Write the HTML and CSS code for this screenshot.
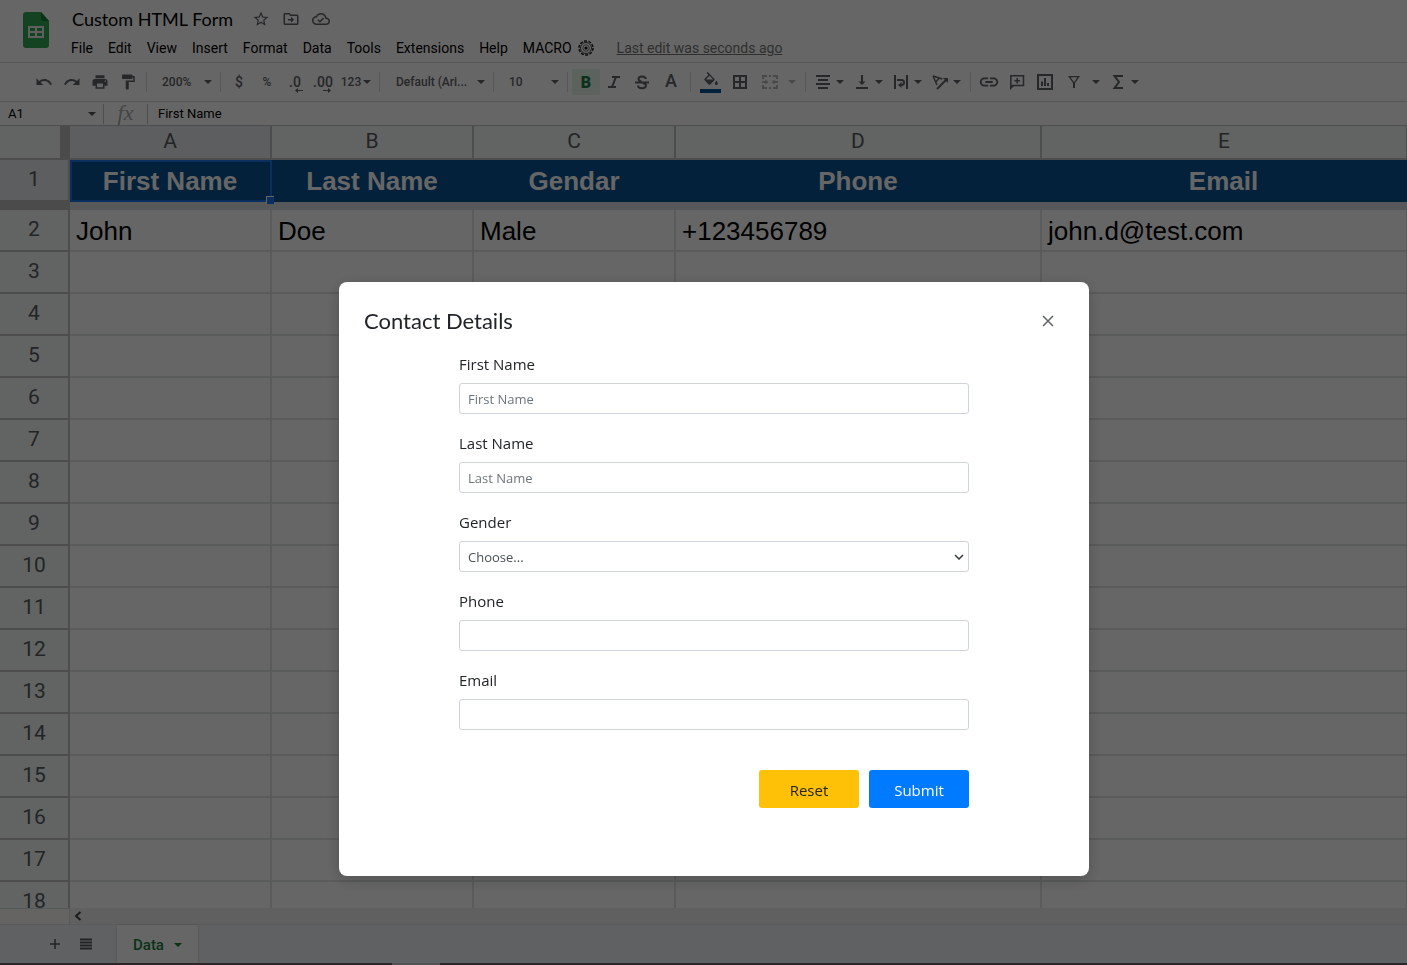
FILE: index.html
```html
<!DOCTYPE html>
<html lang="en">
<head>
<meta charset="utf-8">
<title>Custom HTML Form</title>
<link rel="stylesheet" href="styles.css">
</head>
<body>
<svg class="defs" aria-hidden="true">
  <symbol id="caret" viewBox="0 0 8 4"><path d="M0 0h8L4 4z"/></symbol>
</svg>
<div class="app">
  <header class="header">
    <svg class="logo" viewBox="0 0 26 36" aria-hidden="true">
      <path fill="#34a853" d="M3 0h15l8 9v24a3 3 0 0 1-3 3H3a3 3 0 0 1-3-3V3a3 3 0 0 1 3-3z"/>
      <path fill="#188038" d="M18 0l8 9h-6a2 2 0 0 1-2-2z"/>
      <path fill="#f1f1f1" fill-rule="evenodd" d="M5 14h16v12H5zM7 16v3h5v-3zM14 16v3h5v-3zM7 21v3h5v-3zM14 21v3h5v-3z"/>
    </svg>
    <div class="doc">
      <div class="doc-row">
        <h1 class="doc-title">Custom HTML Form</h1>
        <button class="doc-btn" aria-label="Star"><svg viewBox="0 0 24 24"><path d="M22 9.24l-7.19-.62L12 2 9.19 8.63 2 9.24l5.46 4.73L5.82 21 12 17.27 18.18 21l-1.63-7.03L22 9.24zM12 15.4l-3.76 2.27 1-4.28-3.32-2.88 4.38-.38L12 6.1l1.71 4.04 4.38.38-3.32 2.88 1 4.28L12 15.4z"/></svg></button>
        <button class="doc-btn" aria-label="Move"><svg viewBox="0 0 24 24"><path d="M20 6h-8l-2-2H4c-1.100 0-2 .9-2 2v12c0 1.100.9 2 2 2h16c1.100 0 2-.9 2-2V8c0-1.100-.9-2-2-2zm0 12H4V6h5.170l2 2H20v10zM8 14h4v3l4-4-4-4v3H8z"/></svg></button>
        <button class="doc-btn" aria-label="Saved to cloud"><svg viewBox="0 0 24 24"><path d="M19.350 10.040C18.670 6.590 15.640 4 12 4 9.110 4 6.600 5.640 5.350 8.040 2.340 8.360 0 10.910 0 14c0 3.310 2.690 6 6 6h13c2.760 0 5-2.240 5-5 0-2.640-2.050-4.780-4.650-4.960zM19 18H6c-2.210 0-4-1.790-4-4 0-2.050 1.530-3.760 3.560-3.970l1.070-.11.5-.95C8.080 7.140 9.940 6 12 6c2.620 0 4.880 1.860 5.390 4.430l.3 1.500 1.530.11c1.560.1 2.780 1.410 2.780 2.960 0 1.650-1.350 3-3 3zM10.500 14.200l-2-2-1.400 1.400L10.500 17l5.500-5.500-1.400-1.400z"/></svg></button>
      </div>
      <nav class="menu">
        <button>File</button><button>Edit</button><button>View</button><button>Insert</button><button>Format</button><button>Data</button><button>Tools</button><button>Extensions</button><button>Help</button>
        <button class="macro">MACRO <svg viewBox="0 0 16 16"><circle cx="8" cy="8" r="7" fill="none" stroke="#222" stroke-width="1.500" stroke-dasharray="3 1.400"/><circle cx="8" cy="8" r="5.500" fill="none" stroke="#444"/><circle cx="8" cy="8" r="3.200" fill="none" stroke="#777"/><circle cx="8" cy="8" r="1.600" fill="#111"/></svg></button>
        <a class="last-edit" href="#history">Last edit was seconds ago</a>
      </nav>
    </div>
  </header>

  <div class="toolbar" role="toolbar" aria-label="Formatting">
    <button class="tool" aria-label="Undo"><svg viewBox="0 0 24 24"><path d="M12.500 8c-2.650 0-5.050.99-6.900 2.600L2 7v9h9l-3.620-3.620c1.390-1.160 3.160-1.880 5.120-1.880 3.540 0 6.550 2.310 7.600 5.500l2.370-.78C21.080 11.030 17.150 8 12.500 8z"/></svg></button>
    <button class="tool" aria-label="Redo"><svg viewBox="0 0 24 24"><path d="M18.400 10.600C16.550 8.990 14.150 8 11.500 8c-4.650 0-8.580 3.030-9.960 7.220L3.900 16c1.050-3.190 4.050-5.500 7.600-5.500 1.950 0 3.730.72 5.120 1.880L13 16h9V7l-3.600 3.600z"/></svg></button>
    <button class="tool" aria-label="Print"><svg viewBox="0 0 24 24"><path d="M19 8H5c-1.660 0-3 1.340-3 3v6h4v4h12v-4h4v-6c0-1.660-1.340-3-3-3zm-3 11H8v-5h8v5zm3-7c-.55 0-1-.45-1-1s.45-1 1-1 1 .45 1 1-.45 1-1 1zm-1-9H6v4h12V3z"/></svg></button>
    <button class="tool" aria-label="Paint format"><svg viewBox="0 0 24 24"><path d="M18 4V3c0-.55-.45-1-1-1H5c-.55 0-1 .45-1 1v4c0 .55.45 1 1 1h12c.55 0 1-.45 1-1V6h1v4H9v11c0 .55.45 1 1 1h2c.55 0 1-.45 1-1v-9h8V4h-3z"/></svg></button>
    <span class="sep"></span>
    <button class="tool pick pick-short">200%<svg class="caret"><use href="#caret"/></svg></button>
    <span class="sep"></span>
    <button class="tool currency">$</button>
    <button class="tool percent">%</button>
    <button class="tool decimal">.0<svg class="shift" viewBox="0 0 8 5"><path d="M0 2.500L3 0v2h5v1H3v2z"/></svg></button>
    <button class="tool decimal">.00<svg class="shift" viewBox="0 0 8 5"><path d="M8 2.500L5 0v2H0v1h5v2z"/></svg></button>
    <button class="tool formats">123<svg class="caret"><use href="#caret"/></svg></button>
    <span class="sep"></span>
    <button class="tool pick pick-long">Default (Ari...<svg class="caret"><use href="#caret"/></svg></button>
    <span class="sep"></span>
    <button class="tool pick pick-short">10<svg class="caret"><use href="#caret"/></svg></button>
    <span class="sep"></span>
    <button class="tool bold" aria-pressed="true">B</button>
    <button class="tool" aria-label="Italic"><svg viewBox="0 0 18 18"><path class="line" d="M7 4h8M3 14h8M11 4L7 14"/></svg></button>
    <button class="tool" aria-label="Strikethrough"><svg viewBox="0 0 18 18"><path class="line" d="M2 9.500h14M12.800 6C12.500 2.500 5.500 2.500 5.500 6c0 1.500 1 2.200 3 2.700M10 10.300c2 .5 3 1 3 2.200 0 3.500-8 3.500-8 0"/></svg></button>
    <button class="tool tool-wide letter">A</button>
    <span class="sep"></span>
    <button class="tool tool-wide" aria-label="Fill color"><svg class="fill-icon" viewBox="0 0 21 21"><path d="M14.400 6.700L7.700 0 6.600 1.100l1.800 1.800-3.800 3.800c-.5.5-.5 1.200 0 1.600l4.100 4.100c.5.5 1.200.5 1.600 0l4.100-4.100c.4-.4.4-1.100 0-1.600zM6 7.400l3.600-3.600L13.200 7.400zM16.400 8.800s-1.500 1.700-1.500 2.600a1.500 1.500 0 0 0 3 0c0-.9-1.500-2.600-1.500-2.600z"/><path fill="#0b5394" d="M0 17h21v4H0z"/></svg></button>
    <button class="tool tool-wide" aria-label="Borders"><svg viewBox="0 0 18 18"><path class="line" d="M3 3h12v12H3zM9 3v12M3 9h12"/></svg></button>
    <button class="tool split split-wide muted" aria-label="Merge cells"><svg viewBox="0 0 18 18"><path class="line" d="M6 3H2v3M12 3h4v3M6 15H2v-3M12 15h4v-3M8 3h2M8 15h2M1 9h4M17 9h-4"/><path d="M4.500 6.500L7.500 9l-3 2.500zM13.500 6.500L10.500 9l3 2.500z"/></svg><svg class="caret"><use href="#caret"/></svg></button>
    <span class="sep"></span>
    <button class="tool split" aria-label="Horizontal align"><svg viewBox="0 0 18 18"><path class="line" d="M2 3h14M4 7h10M2 11h14M4 15h10"/></svg><svg class="caret"><use href="#caret"/></svg></button>
    <button class="tool split" aria-label="Vertical align"><svg viewBox="0 0 18 18"><path d="M12.500 8.500H10V2H8v6.500H5.500L9 12zM3 14h12v2H3z"/></svg><svg class="caret"><use href="#caret"/></svg></button>
    <button class="tool split" aria-label="Text wrapping"><svg viewBox="0 0 18 18"><path class="line" d="M3 2v14M15 2v14M5 7h4.500a2.500 2.500 0 0 1 0 5H8"/><path d="M9.500 9v6L6 12z"/></svg><svg class="caret"><use href="#caret"/></svg></button>
    <button class="tool split" aria-label="Text rotation"><svg viewBox="0 0 18 18"><path class="line thin" d="M2 3l9.500 3M2 3l4 9M8.500 5L5 8.500"/><path class="line" d="M6 16l9-9"/><path d="M12 5h5v5z"/></svg><svg class="caret"><use href="#caret"/></svg></button>
    <span class="sep"></span>
    <button class="tool" aria-label="Insert link"><svg class="link-icon" viewBox="0 0 24 24"><path d="M3.900 12c0-1.710 1.390-3.100 3.100-3.100h4V7H7c-2.760 0-5 2.240-5 5s2.240 5 5 5h4v-1.900H7c-1.710 0-3.100-1.390-3.100-3.100zM8 13h8v-2H8v2zm9-6h-4v1.900h4c1.710 0 3.100 1.390 3.100 3.100s-1.390 3.100-3.100 3.100h-4V17h4c2.760 0 5-2.240 5-5s-2.240-5-5-5z"/></svg></button>
    <button class="tool" aria-label="Insert comment"><svg viewBox="0 0 18 18"><path class="line thin" d="M2.800 14V2.800h12.700v9.700H4M9.200 5v5.500M6.500 7.800H12"/><path d="M2 12v5l4-4z"/></svg></button>
    <button class="tool" aria-label="Insert chart"><svg viewBox="0 0 18 18"><path class="line" d="M2 2h14v14H2zM6 8.500V13M9 5v8M12 10v3"/></svg></button>
    <button class="tool split split-wide" aria-label="Filter"><svg viewBox="0 0 18 18"><path fill-rule="evenodd" d="M3 3h12l-5 7v5H8v-5zM5.600 4.300L9 9.200l3.400-4.900z"/></svg><svg class="caret"><use href="#caret"/></svg></button>
    <button class="tool split" aria-label="Functions"><svg viewBox="0 0 18 18"><path class="line" d="M14 3H5.500L10 9l-4.500 6H14"/></svg><svg class="caret"><use href="#caret"/></svg></button>
  </div>

  <div class="formula">
    <button class="name-box">A1<svg class="caret"><use href="#caret"/></svg></button>
    <span class="fx">fx</span>
    <span class="formula-text">First Name</span>
  </div>

  <main class="grid">
    <table class="sheet">
      <colgroup><col class="col-num"><col class="col-short"><col class="col-short"><col class="col-short"><col class="col-long"><col></colgroup>
      <thead>
        <tr class="letters"><th class="corner"></th><th class="active">A</th><th>B</th><th>C</th><th>D</th><th>E</th></tr>
      </thead>
      <tbody>
        <tr class="titles"><th class="active">1</th><td class="selected">First Name<span class="handle"></span></td><td>Last Name</td><td>Gendar</td><td>Phone</td><td>Email</td></tr>
        <tr class="freeze"><th></th><td colspan="5"></td></tr>
        <tr><th>2</th><td>John</td><td>Doe</td><td>Male</td><td>+123456789</td><td>john.d@test.com</td></tr>
        <tr><th>3</th><td></td><td></td><td></td><td></td><td></td></tr>
        <tr><th>4</th><td></td><td></td><td></td><td></td><td></td></tr>
        <tr><th>5</th><td></td><td></td><td></td><td></td><td></td></tr>
        <tr><th>6</th><td></td><td></td><td></td><td></td><td></td></tr>
        <tr><th>7</th><td></td><td></td><td></td><td></td><td></td></tr>
        <tr><th>8</th><td></td><td></td><td></td><td></td><td></td></tr>
        <tr><th>9</th><td></td><td></td><td></td><td></td><td></td></tr>
        <tr><th>10</th><td></td><td></td><td></td><td></td><td></td></tr>
        <tr><th>11</th><td></td><td></td><td></td><td></td><td></td></tr>
        <tr><th>12</th><td></td><td></td><td></td><td></td><td></td></tr>
        <tr><th>13</th><td></td><td></td><td></td><td></td><td></td></tr>
        <tr><th>14</th><td></td><td></td><td></td><td></td><td></td></tr>
        <tr><th>15</th><td></td><td></td><td></td><td></td><td></td></tr>
        <tr><th>16</th><td></td><td></td><td></td><td></td><td></td></tr>
        <tr><th>17</th><td></td><td></td><td></td><td></td><td></td></tr>
        <tr><th>18</th><td></td><td></td><td></td><td></td><td></td></tr>
      </tbody>
    </table>
  </main>

  <div class="scroll">
    <span class="scroll-corner"></span>
    <button class="scroll-left" aria-label="Scroll left"><svg viewBox="0 0 8 10"><path class="line" d="M6.500 1L2 5l4.500 4"/></svg></button>
  </div>
  <footer class="tabs">
    <button class="tab-btn" aria-label="Add sheet"><svg viewBox="0 0 12 12"><path class="line thin" d="M6 1v10M1 6h10"/></svg></button>
    <button class="tab-btn" aria-label="All sheets"><svg viewBox="0 0 12 12"><path class="line" d="M0 1.500h12M0 4.500h12M0 7.500h12M0 10.500h12"/></svg></button>
    <button class="tab">Data<svg class="caret"><use href="#caret"/></svg></button>
  </footer>
  <div class="edge"><span class="edge-mark"></span></div>
</div>

<div class="overlay">
  <section class="dialog" role="dialog" aria-labelledby="dialog-title">
    <header class="dialog-head">
      <h2 class="dialog-title" id="dialog-title">Contact Details</h2>
      <button class="close" aria-label="Close"><svg viewBox="0 0 12 12"><path d="M1 1l10 10M11 1L1 11"/></svg></button>
    </header>
    <form class="form">
      <div class="field"><label for="first">First Name</label><input id="first" type="text" placeholder="First Name"></div>
      <div class="field"><label for="last">Last Name</label><input id="last" type="text" placeholder="Last Name"></div>
      <div class="field"><label for="gender">Gender</label>
        <div class="select-wrap"><select id="gender"><option>Choose...</option><option>Male</option><option>Female</option></select><svg class="chevron" viewBox="0 0 10 6"><path d="M1 1l4 4 4-4"/></svg></div>
      </div>
      <div class="field"><label for="phone">Phone</label><input id="phone" type="tel"></div>
      <div class="field"><label for="email">Email</label><input id="email" type="email"></div>
      <div class="actions"><button class="btn reset" type="reset">Reset</button><button class="btn submit" type="submit">Submit</button></div>
    </form>
  </section>
</div>
</body>
</html>
```
FILE: styles.css
```css
* { box-sizing: border-box; }
body { margin: 0; font-family: Roboto, "Liberation Sans", sans-serif; color: #000; }
button { margin: 0; padding: 0; border: 0; background: none; font: inherit; color: inherit; cursor: pointer; }
svg { display: block; fill: currentColor; flex: none; }
.defs { position: absolute; width: 0; height: 0; }
.line { fill: none; stroke: currentColor; stroke-width: 2; }
.line.thin { stroke-width: 1.5; }
.caret { width: 8px; height: 4px; }

.app { display: flex; flex-direction: column; height: 100vh; overflow: hidden; background: #fff; }

/* Document header */
.header { display: flex; gap: 22px; height: 63px; padding: 0 23px; border-bottom: 1px solid #dadce0; flex: none; }
.logo { width: 26px; height: 36px; margin-top: 12px; }
.doc { padding-top: 6px; }
.doc-row { display: flex; align-items: center; height: 26px; gap: 12px; }
.doc-title { margin: 0 7px 0 0; padding-left: 1px; font: 400 18px Lato, sans-serif; }
.doc-btn { width: 18px; height: 18px; color: #5f6368; }
.doc-btn svg { width: 18px; height: 18px; }
.menu { display: flex; align-items: center; gap: 15px; height: 32px; font-size: 14px; white-space: nowrap; }
.macro { display: flex; align-items: center; gap: 6px; }
.macro svg { width: 16px; height: 16px; }
.last-edit { margin-left: 8px; color: #777; }

/* Toolbar */
.toolbar { display: flex; align-items: center; height: 39px; padding-left: 30px; border-bottom: 1px solid #dadce0; color: #5f6368; font-size: 12px; font-weight: 500; flex: none; }
.tool { display: flex; align-items: center; justify-content: center; width: 28px; height: 26px; flex: none; white-space: nowrap; font-size: 12px; }
.tool svg { width: 18px; height: 18px; }
.tool svg.caret { width: 8px; height: 4px; }
.tool .link-icon { width: 22px; height: 22px; }
.tool .fill-icon { width: 21px; height: 21px; }
.sep { width: 1px; height: 20px; margin: 0 4px; background: #dadce0; flex: none; }
.pick { justify-content: space-between; padding: 0 4px 0 11px; }
.pick-short { width: 65px; }
.pick-long { width: 105px; padding-left: 12px; }
.currency { font-size: 14px; }
.decimal { position: relative; font-size: 14px; }
.tool svg.shift { position: absolute; right: 6px; bottom: 2px; width: 8px; height: 5px; }
.formats { width: 38px; gap: 2px; font-size: 12px; }
.bold { background: #e6f4ea; color: #188038; border-radius: 2px; font-size: 16px; font-weight: 900; }
.letter { font-size: 18px; line-height: 20px; padding-bottom: 2px; }
.tool-wide { width: 30px; }
.split { width: 39px; justify-content: flex-start; gap: 4px; padding-left: 4px; }
.split-wide { width: 46px; gap: 9px; padding-left: 6px; }
.muted { color: #b4b6b8; }

/* Formula bar */
.formula { display: flex; align-items: center; height: 24px; border-bottom: 1px solid #c0c0c0; font-size: 13px; flex: none; }
.name-box { display: flex; align-items: center; justify-content: space-between; width: 104px; height: 20px; padding: 0 7px 0 8px; border-right: 1px solid #c0c0c0; }
.name-box .caret { color: #555; }
.fx { width: 44px; height: 20px; border-right: 1px solid #c0c0c0; color: #aaa; font: italic 22px/18px "Liberation Serif", serif; text-align: center; }
.formula-text { padding-left: 10px; }

/* Spreadsheet */
.grid { flex: 1; min-height: 0; overflow: hidden; }
.sheet { width: 100%; table-layout: fixed; border-collapse: separate; border-spacing: 0; }
.col-num { width: 70px; }
.col-short { width: 202px; }
.col-long { width: 366px; }
.sheet th, .sheet td { height: 42px; padding: 0; border-right: 2px solid #e2e3e3; border-bottom: 2px solid #e2e3e3; }
.sheet th { padding-bottom: 2px; border-color: #c0c0c0; background: #f6faf8; color: #575b60; font-size: 21px; font-weight: 400; line-height: 24px; }
.sheet td { padding: 2px 0 0 6px; font: 26px/36px "Liberation Sans", sans-serif; white-space: nowrap; }
.sheet tr > :last-child { border-right-width: 1px; }
.sheet .letters th { height: 34px; }
.sheet .letters .corner { border-right: 10px solid #bcbcbc; }
.sheet th.active { background: #e8eaed; }
.sheet .titles th { border-bottom-color: #bcbcbc; }
.sheet .titles td { position: relative; padding: 0 2px 0 0; border: 0; background: #0b5394; color: #fff; font-weight: 700; text-align: center; }
.sheet .titles .selected { border: 2px solid #1a73e8; }
.handle { position: absolute; right: -4px; bottom: -4px; z-index: 1; width: 8px; height: 8px; border: 1px solid #fff; border-width: 1px 0 0 1px; background: #1a73e8; }
.sheet .freeze th { height: 8px; padding: 0; border: 0; background: #bcbcbc; }
.sheet .freeze td { height: 8px; padding: 0; border: 0; background: #dadce0; }

/* Sheet tabs */
.scroll { display: flex; height: 17px; background: #f1f1f1; border-bottom: 1px solid #e2e3e3; flex: none; }
.scroll-corner { width: 70px; background: #fcfbf6; border-right: 1px solid #dadce0; border-top: 1px solid #dadce0; }
.scroll-left { padding-left: 4px; color: #444; }
.scroll-left svg { width: 8px; height: 10px; }
.tabs { display: flex; align-items: center; height: 38px; padding-left: 49px; background: #f1f3f4; color: #55585d; flex: none; }
.tab-btn { margin-right: 19px; }
.tab-btn svg { width: 12px; height: 12px; }
.tab { display: flex; align-items: center; gap: 10px; height: 38px; padding: 2px 16px 0 16px; margin-left: 6px; background: #fff; color: #188038; font-size: 15px; font-weight: 500; box-shadow: 0 0 2px #bbb; }
.edge { height: 2px; padding-left: 392px; background: #6b6064; flex: none; }
.edge-mark { display: block; width: 48px; height: 2px; background: #ccc; }

/* Contact dialog */
.overlay { position: fixed; inset: 0; z-index: 10; display: flex; justify-content: center; align-items: flex-start; padding: 282px 0 0 21px; background: rgba(0, 0, 0, .6); }
.dialog { width: 750px; max-width: 100%; padding: 24px 25px 68px; border-radius: 8px; background: #fff; box-shadow: 0 4px 16px rgba(0, 0, 0, .2); color: #212529; }
.dialog-head { display: flex; align-items: center; justify-content: space-between; height: 30px; margin-bottom: 15px; padding-right: 10px; }
.dialog-title { margin: 0; font: 400 22px/30px Lato, sans-serif; }
.close { width: 12px; height: 14px; }
.close svg { width: 12px; height: 12px; stroke: #5f6368; stroke-width: 1.5; }
.form { margin: 0 95px; font-family: "Open Sans", sans-serif; font-size: 15px; }
.field { margin-bottom: 16px; }
.field label { display: block; margin-bottom: 6px; line-height: 26px; }
.field input, .field select { display: block; width: 100%; height: 31px; padding: 0 8px; border: 1px solid #ced4da; border-radius: 3px; background: #fff; color: #495057; font: 13px "Open Sans", sans-serif; appearance: none; }
.field input::placeholder { color: #6c757d; opacity: 1; }
.select-wrap { position: relative; }
.chevron { position: absolute; right: 5px; top: 13px; width: 10px; height: 6px; fill: none; stroke: #343a40; stroke-width: 1.5; pointer-events: none; }
.actions { display: flex; justify-content: flex-end; gap: 10px; margin-top: 40px; }
.btn { width: 100px; height: 38px; padding-top: 2px; border-radius: 3px; }
.reset { background: #ffc107; }
.submit { background: #007bff; color: #fff; }
```
